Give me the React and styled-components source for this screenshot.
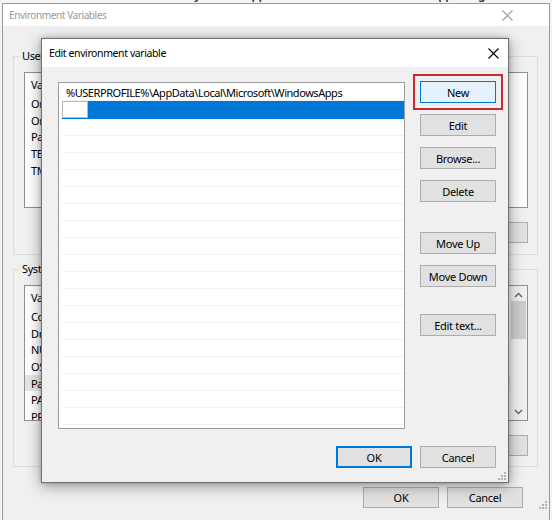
import React from "react";
import styled, { createGlobalStyle, css } from "styled-components";

const FONT = `"Noto Sans", "Open Sans", "DejaVu Sans", sans-serif`;

const GlobalStyle = createGlobalStyle`
  html, body { margin: 0; padding: 0; background: #ffffff; }
  body { font-family: ${FONT}; }
  #root { width: 552px; height: 520px; }
`;

const Desktop = styled.div`
  position: relative;
  width: 552px;
  height: 520px;
  overflow: hidden;
  background: #f4f4f4;
  font-family: ${FONT};
  font-size: 11px;
  letter-spacing: -0.4px;
  color: #000;
`;

const BehindText = styled.div`
  position: absolute;
  top: -14px;
  left: ${(p) => p.$left}px;
  font-size: 12px;
  font-weight: 600;
  color: #333;
  white-space: nowrap;
`;

const Window = styled.div`
  position: absolute;
  left: ${(p) => p.$x}px;
  top: ${(p) => p.$y}px;
  width: ${(p) => p.$w}px;
  height: ${(p) => p.$h}px;
  box-sizing: border-box;
  background: #f0f0f0;
  border: 1px solid ${(p) => (p.$active ? "#707070" : "#9c9c9c")};
  box-shadow: ${(p) =>
    p.$active ? "0 3px 14px rgba(0,0,0,0.38), 0 0 4px rgba(0,0,0,0.2)" : "none"};
  display: flex;
  flex-direction: column;
`;

const TitleBar = styled.div`
  flex: 0 0 ${(p) => p.$h}px;
  background: #ffffff;
  display: flex;
  align-items: center;
  justify-content: space-between;
  padding: 0 ${(p) => p.$pr}px 0 ${(p) => p.$pl}px;
  color: ${(p) => (p.$active ? "#000" : "#9a9a9a")};
  font-size: ${(p) => p.$fs}px;
`;

const CloseIcon = ({ color }) => (
  <svg width="11" height="11" viewBox="0 0 11 11">
    <path d="M0.5 0.5 L10.5 10.5 M10.5 0.5 L0.5 10.5" stroke={color} strokeWidth="1.1" />
  </svg>
);

const Grip = styled.div`
  position: absolute;
  right: ${(p) => p.$r}px;
  bottom: ${(p) => p.$b}px;
  width: 8px;
  height: 8px;
  display: flex;
`;

const GripIcon = () => (
  <svg width="8" height="8" viewBox="0 0 8 8">
    {[
      [6, 0],
      [6, 3],
      [3, 3],
      [6, 6],
      [3, 6],
      [0, 6],
    ].map(([x, y], i) => (
      <rect key={i} x={x} y={y} width="2" height="2" fill="#b3b3b3" />
    ))}
  </svg>
);

/* ---------- background window ---------- */

const BackBody = styled.div`
  flex: 1;
  display: flex;
  flex-direction: column;
  padding: 23px 11px 0 10px;
`;

const Group = styled.fieldset`
  margin: ${(p) => p.$mt}px 0 0 0;
  padding: ${(p) => p.$pt}px 9px ${(p) => p.$pb}px 10px;
  border: 1px solid #dcdcdc;
  min-width: 0;
  display: flex;
  flex-direction: column;
`;

const Legend = styled.legend`
  padding: 0 2px;
  margin-left: -4px;
  line-height: 14px;
  font-size: 11px;
  white-space: nowrap;
`;

const ListView = styled.div`
  box-sizing: border-box;
  height: 136px;
  border: 1px solid #8f8f8f;
  background: #fff;
  display: flex;
  overflow: hidden;
`;

const ListMain = styled.div`
  flex: 1;
  min-width: 0;
  display: flex;
  flex-direction: column;
`;

const ListCols = styled.div`
  flex: 0 0 ${(p) => p.$h}px;
  display: grid;
  grid-template-columns: 160px 1fr;
  align-items: center;
  padding-left: 6px;
  background: ${(p) => (p.$selected ? "#e6e6e6" : "transparent")};
  white-space: nowrap;
`;

const Scrollbar = styled.div`
  flex: 0 0 17px;
  background: #f0f0f0;
  display: flex;
  flex-direction: column;
`;

const ScrollArrow = styled.div`
  flex: 0 0 17px;
  display: flex;
  align-items: center;
  justify-content: center;
`;

const ScrollTrack = styled.div`
  flex: 1;
  padding: 0 1px;
  display: flex;
  flex-direction: column;
`;

const Thumb = styled.div`
  height: 38px;
  margin-top: -2px;
  background: #cdcdcd;
`;

const Chevron = ({ up }) => (
  <svg width="9" height="6" viewBox="0 0 9 6">
    <path
      d={up ? "M1 5 L4.5 1.5 L8 5" : "M1 1 L4.5 4.5 L8 1"}
      stroke="#606060"
      strokeWidth="1.3"
      fill="none"
    />
  </svg>
);

const ButtonRow = styled.div`
  display: flex;
  justify-content: flex-end;
  gap: 8px;
  margin-top: ${(p) => p.$mt}px;
  padding-right: ${(p) => p.$pr || 0}px;
`;

const Button = styled.button`
  box-sizing: border-box;
  width: ${(p) => p.$w || 76}px;
  height: ${(p) => p.$h || 22}px;
  margin: 0;
  margin-top: ${(p) => p.$mt || 0}px;
  padding: 0;
  font-family: ${FONT};
  font-size: 11px;
  letter-spacing: -0.3px;
  color: #000;
  background: ${(p) => (p.$focus ? "#e5f1fb" : "#e1e1e1")};
  border: 1px solid ${(p) => (p.$default ? "#0078d7" : "#adadad")};
  ${(p) =>
    p.$default &&
    !p.$focus &&
    css`
      box-shadow: inset 0 0 0 1px #0078d7;
    `}
  ${(p) =>
    p.$mark &&
    css`
      outline: 2px solid #cc2a32;
      outline-offset: 5px;
    `}
`;

/* ---------- foreground dialog ---------- */

const DialogBody = styled.div`
  flex: 1;
  display: grid;
  grid-template-columns: 347px 76px;
  grid-template-rows: 347px auto;
  column-gap: 15px;
  padding: 15px 12px 13px 16px;
`;

const PathList = styled.div`
  box-sizing: border-box;
  border: 1px solid #9c9c9c;
  background: #fff;
  padding: 1px 0 0 3px;
  overflow: hidden;
  display: flex;
  flex-direction: column;
  letter-spacing: -0.45px;
`;

const PathRow = styled.div`
  flex: 0 0 17px;
  box-sizing: border-box;
  border-bottom: 1px solid ${(p) => (p.$selected ? "#0078d7" : "#f1f1f1")};
  background: ${(p) => (p.$selected ? "#0078d7" : "transparent")};
  display: flex;
  align-items: center;
  padding-left: ${(p) => (p.$selected ? 0 : 4)}px;
  white-space: nowrap;
`;

const EditBox = styled.div`
  box-sizing: border-box;
  width: 26px;
  height: 17px;
  background: #fff;
  border: 1px solid #b9b9b9;
`;

const SideButtons = styled.div`
  display: flex;
  flex-direction: column;
  align-items: flex-start;
  margin-top: -1px;
  gap: 11px;
`;

const DialogFooter = styled.div`
  grid-column: 1 / -1;
  display: flex;
  justify-content: flex-end;
  gap: 8px;
  margin-top: 17px;
`;

const userVars = [
  ["OneDrive", "C:\\Users\\user\\OneDrive"],
  ["OneDriveConsumer", "C:\\Users\\user\\OneDrive"],
  ["Path", "%USERPROFILE%\\AppData\\Local\\Microsoft\\WindowsApps;"],
  ["TEMP", "%USERPROFILE%\\AppData\\Local\\Temp"],
  ["TMP", "%USERPROFILE%\\AppData\\Local\\Temp"],
];

const sysVars = [
  ["ComSpec", "C:\\Windows\\system32\\cmd.exe"],
  ["DriverData", "C:\\Windows\\System32\\Drivers\\DriverData"],
  ["NUMBER_OF_PROCESSORS", "4"],
  ["OS", "Windows_NT"],
  ["Path", "C:\\Windows\\system32;C:\\Windows;"],
  ["PATHEXT", ".COM;.EXE;.BAT;.CMD;.VBS;.VBE;.JS"],
  ["PROCESSOR_ARCHITECTURE", "AMD64"],
];

function VarList({ rows, scroll, selected }) {
  return (
    <ListView>
      <ListMain>
        <ListCols $h={22}>
          <span>Variable</span>
          <span>Value</span>
        </ListCols>
        {rows.map(([k, v]) => (
          <ListCols key={k + v} $h={16.7} $selected={k === selected}>
            <span>{k}</span>
            <span>{v}</span>
          </ListCols>
        ))}
      </ListMain>
      {scroll && (
        <Scrollbar>
          <ScrollArrow>
            <Chevron up />
          </ScrollArrow>
          <ScrollTrack>
            <Thumb />
          </ScrollTrack>
          <ScrollArrow>
            <Chevron />
          </ScrollArrow>
        </Scrollbar>
      )}
    </ListView>
  );
}

export default function App() {
  const emptyRows = Array.from({ length: 18 });
  return (
    <>
      <GlobalStyle />
      <Desktop>
        <BehindText $left={135}>Windows System32 AppData Local Microsoft WindowsApps</BehindText>
        <BehindText $left={446}>Settings</BehindText>

        <Window $x={2} $y={3} $w={548} $h={540}>
          <TitleBar $h={22} $pl={6} $pr={36} $fs={10}>
            <span>Environment Variables</span>
            <CloseIcon color="#9a9a9a" />
          </TitleBar>
          <BackBody>
            <Group $mt={0} $pt={9} $pb={11}>
              <Legend>User variables for user</Legend>
              <VarList rows={userVars} />
              <ButtonRow $mt={14}>
                <Button $h={21}>New...</Button>
                <Button $h={21}>Edit...</Button>
                <Button $h={21}>Delete</Button>
              </ButtonRow>
            </Group>
            <Group $mt={7} $pt={9} $pb={10}>
              <Legend>System variables</Legend>
              <VarList rows={sysVars} scroll selected="Path" />
              <ButtonRow $mt={14}>
                <Button $h={21}>New...</Button>
                <Button $h={21}>Edit...</Button>
                <Button $h={21}>Delete</Button>
              </ButtonRow>
            </Group>
            <ButtonRow $mt={20} $pr={15}>
              <Button $h={21}>OK</Button>
              <Button $h={21}>Cancel</Button>
            </ButtonRow>
          </BackBody>
          <Grip $r={2} $b={33}>
            <GripIcon />
          </Grip>
        </Window>

        <Window $active $x={41} $y={38} $w={468} $h={445}>
          <TitleBar $h={28} $pl={7} $pr={9} $fs={10.5} $active>
            <span>Edit environment variable</span>
            <CloseIcon color="#000" />
          </TitleBar>
          <DialogBody>
            <PathList>
              <PathRow>%USERPROFILE%\AppData\Local\Microsoft\WindowsApps</PathRow>
              <PathRow $selected>
                <EditBox />
              </PathRow>
              {emptyRows.map((_, i) => (
                <PathRow key={i} />
              ))}
            </PathList>
            <SideButtons>
              <Button $default $focus $mark>
                New
              </Button>
              <Button>Edit</Button>
              <Button>Browse...</Button>
              <Button>Delete</Button>
              <Button $mt={19}>Move Up</Button>
              <Button>Move Down</Button>
              <Button $mt={16}>Edit text...</Button>
            </SideButtons>
            <DialogFooter>
              <Button $default>OK</Button>
              <Button>Cancel</Button>
            </DialogFooter>
          </DialogBody>
          <Grip $r={2} $b={2}>
            <GripIcon />
          </Grip>
        </Window>
      </Desktop>
    </>
  );
}
